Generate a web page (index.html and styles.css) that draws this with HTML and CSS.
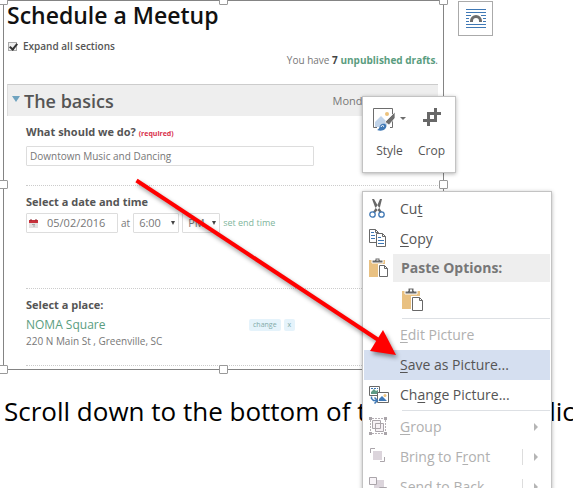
FILE: index.html
```html
<!DOCTYPE html>
<html lang="en">
<head>
<meta charset="utf-8">
<title>Schedule a Meetup</title>
<link rel="stylesheet" href="styles.css">
</head>
<body>
<main class="document">
  <section class="picture">
    <h1 class="title">Schedule a Meetup</h1>
    <label class="expand"><input type="checkbox" class="tick" checked>Expand all sections</label>
    <p class="drafts">You have <b>7</b> <a href="#drafts">unpublished drafts</a>.</p>
    <header class="bar">
      <svg class="bar-arrow" width="8" height="6" viewBox="0 0 8 6"><path d="M0 0h8L4 6z" fill="#6fa3bf"/></svg>
      <h2 class="bar-title">The basics</h2>
      <span class="bar-date">Monday, May 2, 6:00</span>
    </header>
    <div class="group group-what">
      <label class="label" for="what">What should we do? <small class="required">(required)</small></label>
      <input id="what" class="field what" type="text" value="Downtown Music and Dancing">
    </div>
    <div class="group group-when">
      <label class="label" for="date">Select a date and time</label>
      <div class="when">
        <span class="field date">
          <svg width="9" height="9" viewBox="0 0 9 9"><path d="M0 1h9v8H0z" fill="#e4e1e1"/><path d="M0 1h9v3H0z" fill="#c8323c"/><path d="M2 0v2M7 0v2" stroke="#8c2830"/><path d="M3 5.500h3M5 5v3" stroke="#aaa"/></svg>
          <input id="date" type="text" value="05/02/2016">
        </span>
        <label for="hour">at</label>
        <span class="choice"><select id="hour" class="field hour"><option>6:00</option></select></span>
        <span class="choice"><select class="field half" aria-label="AM or PM"><option>PM</option></select></span>
        <a class="end" href="#end">set end time</a>
      </div>
    </div>
    <div class="group group-place">
      <h3 class="label">Select a place:</h3>
      <div class="place">
        <a class="venue" href="#venue">NOMA Square</a>
        <button class="chip">change</button>
        <button class="chip">x</button>
      </div>
      <p class="address">220 N Main St , Greenville, SC</p>
    </div>
    <i class="handle top left"></i><i class="handle top center"></i><i class="handle top right"></i>
    <i class="handle middle left"></i><i class="handle middle right"></i>
    <i class="handle bottom left"></i><i class="handle bottom center"></i><i class="handle bottom right"></i>
  </section>
  <p class="body-text">Scroll down to the bottom of the dialog and click</p>
</main>

<button class="layout-button" aria-label="Layout options">
  <svg width="20" height="20" viewBox="0 0 20 20"><path d="M0 .5h20M0 3.500h20M0 6.500h5M15 6.500h5M0 9.500h3M17 9.500h3M0 12.500h3M17 12.500h3M0 15.500h20M0 18.500h20" stroke="#3f78b5"/><path d="M5.500 13v-1a4.500 4.500 0 0 1 9 0v1" fill="none" stroke="#6d6d6d" stroke-width="3"/></svg>
</button>

<div class="toolbar">
  <button class="tool">
    <span class="tool-icon">
      <svg width="22" height="23" viewBox="0 0 22 23"><path d="M17 19.500h2.500V.5H.5v19H4" fill="#fff" stroke="#6d6d6d"/><path d="M2 14l6-6 7 7-3 4H2z" fill="#c0d3e9"/><circle cx="14" cy="6" r="2" fill="#edc27c"/><path d="M22 4v6l-6 7-4-3 7-7z" fill="#6d6d6d" stroke="#fff" stroke-width=".7"/><path d="M4 22c3-1 2-5 5-6 4-1 6 2 3 5-2 2-5 2-8 1z" fill="#3f78b5"/><path d="M8 19c1-3 4-1 2 0" fill="none" stroke="#fff"/></svg>
      <svg class="caret" width="6" height="3" viewBox="0 0 6 3"><path d="M0 0h6L3 3z" fill="#6d6d6d"/></svg>
    </span>
    Style
  </button>
  <button class="tool">
    <span class="tool-icon"><svg width="18" height="18" viewBox="0 0 18 18"><path d="M0 12.500H14M4 5.500H18M5.500 4V18M12.500 0V14" fill="none" stroke="#686868" stroke-width="3"/></svg></span>
    Crop
  </button>
</div>

<nav class="menu" aria-label="Picture menu">
  <button class="item">
    <svg class="icon" width="20" height="20" viewBox="0 0 20 20"><path d="M3 0h2l4 7 4 6-2 1-5-6zM13 0h-2L8 7l-4 6 2 1 5-6z" fill="#686868"/><circle cx="3.500" cy="15.500" r="2.700" fill="none" stroke="#3f78b5" stroke-width="1.300"/><circle cx="12.500" cy="15.500" r="2.700" fill="none" stroke="#3f78b5" stroke-width="1.300"/></svg>
    <span>Cu<u>t</u></span>
  </button>
  <button class="item">
    <svg class="icon" width="20" height="20" viewBox="0 0 20 20"><path d="M7.500 13.500h-7v-13h6l3 3M6.500.5v3h3" fill="#fff" stroke="#686868"/><path d="M2 3.500h3M2 6.500h4M2 9.500h4" stroke="#3f78b5"/><path d="M7.500 4.500h6l3 3v10h-9zM13.500 4.500v3h3" fill="#fff" stroke="#686868"/><path d="M9 8.500h3M9 11.500h6M9 14.500h6" stroke="#3f78b5"/></svg>
    <span><u>C</u>opy</span>
  </button>
  <div class="heading">
    <svg class="icon" width="20" height="20" viewBox="0 0 20 20"><path d="M0 2h16v17H0z" fill="#e9c182"/><path d="M3 5V2h3V0h5v2h3v3z" fill="#686868" stroke="#fff"/><path d="M7.500 1.500h2v1h-2z" fill="#fff"/><path d="M9 6h7l4 4v9H9z" fill="#fff"/><path d="M10.500 7.500h5l3 3v8h-8zM15.500 7.500v3h3" fill="#fff" stroke="#686868"/></svg>
    <h4 class="heading-text">Paste Options:</h4>
  </div>
  <button class="item paste" aria-label="Paste picture">
    <svg width="22" height="24" viewBox="0 0 22 24"><path d="M0 3h18v18H0z" fill="#e9c182"/><path d="M3 6V3h3V0h6v3h3v3z" fill="#686868" stroke="#fff"/><path d="M8 1.500h2v2H8z" fill="#fff"/><path d="M9 8h9l4 4v12H9z" fill="#fff"/><path d="M10.500 9.500h7l3 3v10h-10zM17.500 9.500v3h3" fill="#fff" stroke="#686868"/></svg>
  </button>
  <hr class="rule">
  <button class="item off" disabled><i class="icon"></i><span><u>E</u>dit Picture</span></button>
  <button class="item active"><i class="icon"></i><span><u>S</u>ave as Picture...</span></button>
  <button class="item">
    <svg class="icon" width="20" height="20" viewBox="0 0 20 20"><path d="M.5 1.500h10v9H.5z" fill="#fff" stroke="#686868"/><path d="M2 9V7l3-3 2 2 2-1v4z" fill="#5c9a85"/><path d="M2 3.500h7" stroke="#3f78b5" stroke-dasharray="2 1"/><path d="M8.500 7.500h11v10h-11z" fill="#fff" stroke="#686868"/><path d="M10 16v-2l3-3 5 5z" fill="#3f78b5"/><circle cx="16" cy="10.500" r="1.500" fill="#edc27c"/><path d="M2.500 11.500v2l2 2H8M5.500 12.500l3 3-3 3" fill="none" stroke="#3f78b5" stroke-width="1.500"/></svg>
    <span>Ch<u>a</u>nge Picture...</span>
  </button>
  <hr class="rule">
  <button class="item off" disabled>
    <svg class="icon" width="20" height="20" viewBox="0 0 20 20"><path d="M1.500 3v12M16.500 3v12M3 1.500h12M3 16.500h12" stroke="#b5afb5" stroke-dasharray="2 1"/><path d="M0 0h3v3H0zM15 0h3v3h-3zM0 15h3v3H0zM15 15h3v3h-3z" fill="#aaa5aa"/><path d="M3.500 3.500h8v8h-8zM6.500 6.500h8v8h-8z" fill="#f0e8ef" fill-opacity=".6" stroke="#aaa5aa"/></svg>
    <span><u>G</u>roup</span><i class="more"></i>
  </button>
  <button class="item off split" disabled>
    <svg class="icon" width="20" height="20" viewBox="0 0 20 20"><path d="M1.500 6V1.500H6M11 14.500h4.500V10" fill="none" stroke="#aaa5aa"/><path d="M4 4h9v9H4z" fill="#dcd5dc"/></svg>
    <span>Bring to F<u>r</u>ont</span><i class="more"></i>
  </button>
  <button class="item off split" disabled>
    <svg class="icon" width="20" height="20" viewBox="0 0 20 20"><path d="M5 3h10v10H5z" fill="#dcd5dc"/><path d="M.5.5h7v7h-7zM10.500 10.500h7v7h-7z" fill="#f8f4f8" stroke="#aaa5aa"/></svg>
    <span>Send to Bac<u>k</u></span><i class="more"></i>
  </button>
</nav>

<svg class="pointer" width="280" height="190" viewBox="0 0 280 190"><path d="M6.500 6.500L250 167" stroke="#f00" stroke-width="4"/><path d="M266 181L240 177 253 156z" fill="#f00"/></svg>
</body>
</html>
```

FILE: styles.css
```css
* {
  box-sizing: border-box;
}

body {
  margin: 0;
  height: 100vh;
  position: relative;
  overflow: hidden;
  background: #fff;
  color: #777;
  font: 12px/16px "Open Sans", "Noto Sans", sans-serif;
}

h1, h2, h3, h4, p {
  margin: 0;
}

a {
  color: #5a9d80;
  text-decoration: none;
}

button, input, select {
  font: inherit;
  color: inherit;
}

button {
  border: 0;
  padding: 0;
  background: none;
}

.picture {
  position: relative;
  margin: 0 129px 0 3px;
  padding: 0 5px 3px 3px;
  border: 1px solid #848484;
}

.title {
  color: #111;
  font-size: 23px;
  line-height: 28px;
  font-weight: 600;
}

.expand {
  display: flex;
  align-items: center;
  gap: 6px;
  margin-top: 9px;
  padding-left: 1px;
  color: #555;
  font-size: 10px;
  font-weight: 600;
}

.tick {
  appearance: none;
  width: 9px;
  height: 9px;
  margin: 0;
  border: 1px solid #aaa;
  background: #eee;
  display: grid;
}

.tick:checked::after {
  content: "";
  width: 3px;
  height: 6px;
  margin: -1px 0 0 2px;
  border: solid #333;
  border-width: 0 2px 2px 0;
  transform: rotate(40deg);
}

.drafts {
  text-align: right;
  font-size: 10px;
  line-height: 12px;
}

.drafts b {
  color: #444;
}

.drafts a {
  font-weight: 700;
}

.bar {
  display: flex;
  align-items: center;
  height: 32px;
  margin-top: 18px;
  padding-left: 4px;
  border-top: 1px solid #ccc;
  border-left: 1px solid #ddd;
  background: #eee;
  overflow: hidden;
  white-space: nowrap;
}

.bar-arrow {
  margin-bottom: 4px;
}

.bar-title {
  margin-left: 4px;
  color: #555;
  font-size: 18px;
  font-weight: 600;
}

.bar-date {
  margin-left: auto;
  font-size: 11px;
}

.group {
  margin-left: 19px;
  border-bottom: 1px dotted #ccc;
}

.group-what {
  padding: 8px 0 19px;
}

.group-when {
  padding: 8px 0 55px;
}

.group-place {
  padding: 8px 0 16px;
}

.label {
  display: block;
  color: #555;
  font-size: 11px;
  line-height: 16px;
  font-weight: 700;
}

.required {
  color: #d9304c;
  font-size: 7px;
}

.field {
  height: 20px;
  border: 1px solid #ddd;
  border-radius: 1px;
  background: #fff;
  font-size: 11px;
}

.what {
  display: block;
  width: 70%;
  margin-top: 4px;
  padding: 0 3px;
  font-size: 10px;
}

.when {
  display: flex;
  align-items: center;
  gap: 3px;
  margin-top: 3px;
  font-size: 10px;
}

.date {
  display: flex;
  align-items: center;
  gap: 9px;
  width: 92px;
  padding-left: 2px;
}

.date input {
  min-width: 0;
  flex: 1;
  padding: 0;
  border: 0;
}

.choice {
  display: grid;
  align-items: center;
}

.choice > select,
.choice::after {
  grid-area: 1 / 1;
}

.choice::after {
  content: "";
  justify-self: end;
  margin-right: 4px;
  border: solid transparent;
  border-width: 4px 2px 0;
  border-top-color: #444;
}

.hour, .half {
  appearance: none;
  width: 46px;
  padding: 0 5px;
}

.half {
  width: 38px;
}

.end {
  color: #80b59c;
  font-size: 9px;
}

.place {
  display: flex;
  align-items: center;
  gap: 3px;
  margin-top: 4px;
}

.venue {
  width: 220px;
}

.chip {
  padding: 0 4px;
  border-radius: 2px;
  background: #e5f3fb;
  color: #83aaa8;
  font-size: 7px;
  line-height: 12px;
}

.address {
  font-size: 10px;
}

.handle {
  position: absolute;
  width: 9px;
  height: 9px;
  border: 1px solid #999;
  border-radius: 1px;
  background: #fff;
}

.top { top: -5px; }
.middle { top: calc(50% - 5px); }
.bottom { bottom: -5px; }
.left { left: -5px; }
.center { left: calc(50% - 5px); }
.right { right: -5px; }

.body-text {
  margin: 25px 0 0 4px;
  color: #000;
  font-size: 26px;
  line-height: 32px;
  white-space: nowrap;
}

.layout-button {
  position: absolute;
  top: 1px;
  left: 458px;
  display: grid;
  place-items: center;
  width: 35px;
  height: 35px;
  border: 1px solid #aaa;
  background: #fff;
}

.toolbar, .menu {
  position: absolute;
  left: 362px;
  border: 1px solid #c3c3c3;
  background: #fff;
  color: #555;
  box-shadow: 0 1px 4px rgba(0, 0, 0, .3);
}

.toolbar {
  top: 96px;
  display: flex;
  gap: 12px;
  padding: 11px 10px 13px;
  font-size: 12px;
}

.tool-icon {
  display: flex;
  justify-content: center;
  height: 35px;
}

.caret {
  margin: 9px 0 0 5px;
}

.menu {
  top: 191px;
  width: 190px;
  padding: 2px 1px;
  font-size: 14px;
}

.item {
  display: flex;
  align-items: center;
  width: 100%;
  height: 30px;
  padding-left: 5px;
}

.icon {
  flex: none;
  width: 20px;
  margin-right: 11px;
}

.item u {
  text-underline-offset: 2px;
}

.heading {
  display: flex;
  align-items: center;
  padding-left: 5px;
}

.heading .icon {
  margin-right: 4px;
}

.heading-text {
  flex: 1;
  padding-left: 8px;
  background: #eee;
  color: #777;
  font-size: 14px;
  line-height: 28px;
}

.paste {
  height: 36px;
  padding-left: 38px;
}

.rule {
  margin: 0 0 1px 38px;
  border: 0;
  border-top: 1px solid #dde0e4;
}

.off {
  color: #b0b0b0;
}

.active {
  background: #d5dff0;
}

.more {
  display: flex;
  align-items: center;
  justify-content: flex-end;
  width: 16px;
  height: 16px;
  margin: 0 12px 0 auto;
}

.more::after {
  content: "";
  border: solid transparent;
  border-width: 4px 0 4px 4px;
  border-left-color: #b5b5b5;
}

.split .more {
  border-left: 1px solid #ddd;
}

.pointer {
  position: absolute;
  top: 174px;
  left: 130px;
  pointer-events: none;
  filter: drop-shadow(2px 3px 2px rgba(0, 0, 0, .4));
}
```
